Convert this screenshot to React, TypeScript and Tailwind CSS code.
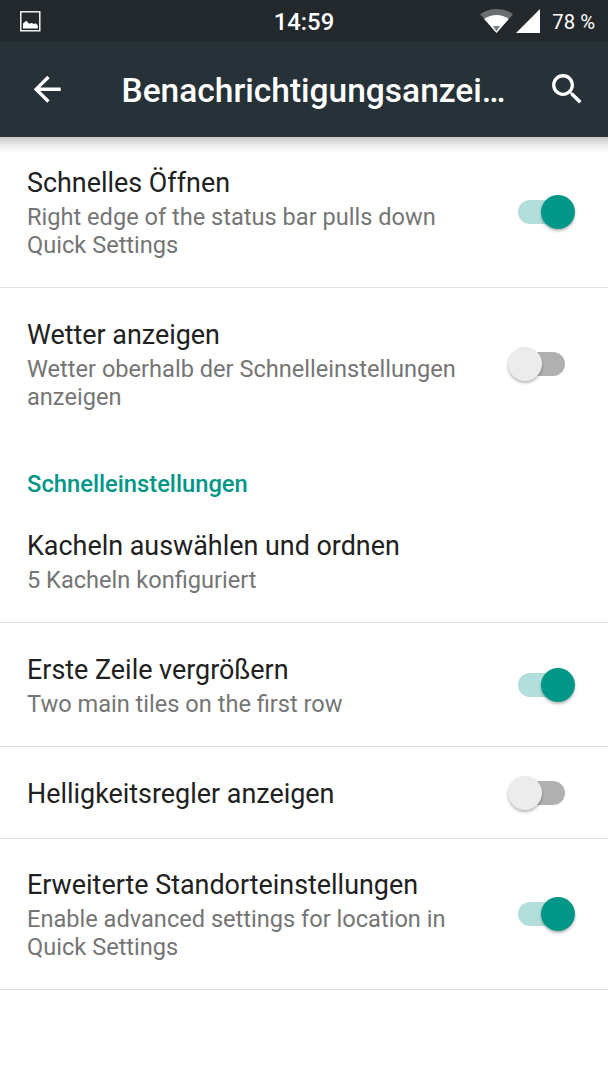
import { useState } from 'react'

interface Preference {
  id: string
  title: string
  summary?: string
  checked?: boolean
  divider?: boolean
  height: string
}

interface Section {
  header?: string
  items: Preference[]
}

const sections: Section[] = [
  {
    items: [
      {
        id: 'quick-pulldown',
        title: 'Schnelles Öffnen',
        summary: 'Right edge of the status bar pulls down Quick Settings',
        checked: true,
        divider: true,
        height: 'h-[151px]'
      },
      {
        id: 'weather',
        title: 'Wetter anzeigen',
        summary: 'Wetter oberhalb der Schnelleinstellungen anzeigen',
        checked: false,
        height: 'h-[151px]'
      }
    ]
  },
  {
    header: 'Schnelleinstellungen',
    items: [
      {
        id: 'tiles',
        title: 'Kacheln auswählen und ordnen',
        summary: '5 Kacheln konfiguriert',
        divider: true,
        height: 'h-[123px]'
      },
      {
        id: 'main-tiles',
        title: 'Erste Zeile vergrößern',
        summary: 'Two main tiles on the first row',
        checked: true,
        divider: true,
        height: 'h-[124px]'
      },
      {
        id: 'brightness',
        title: 'Helligkeitsregler anzeigen',
        checked: false,
        divider: true,
        height: 'h-[92px]'
      },
      {
        id: 'location',
        title: 'Erweiterte Standorteinstellungen',
        summary: 'Enable advanced settings for location in Quick Settings',
        checked: true,
        divider: true,
        height: 'h-[151px]'
      }
    ]
  }
]

function StatusBar() {
  return (
    <div className="grid h-[42px] grid-cols-3 items-center bg-[#23282c] pr-[13px] pl-5 text-white">
      <svg className="h-[21px] w-[21px]" viewBox="0 0 21 21" fill="none">
        <rect x="0.8" y="0.8" width="19" height="19" stroke="#fff" strokeWidth="1.4" />
        <path d="M3 17.6V12.5L6.2 9.8L9.2 12.8L11.5 12L14 13L15.5 12.2L17.8 14.2V17.6Z" fill="#fff" />
      </svg>
      <div className="pt-1 pr-[7px] text-center text-[23.8px] leading-none font-medium">14:59</div>
      <div className="flex items-center justify-end">
        <svg className="h-6 w-[33px]" viewBox="0 0 33 24">
          <path d="M0 5.2C9.5 -1.7 23.5 -1.7 33 5.2L16.5 24Z" fill="#6b6e70" />
          <path d="M4.2 10C11.5 4.6 21.5 4.6 28.8 10L16.5 24Z" fill="#fff" />
          <path d="M13 17H20L16.5 22.5Z" fill="#7b7e80" />
        </svg>
        <svg className="ml-[3px] h-6 w-6" viewBox="0 0 24 24" fill="#fff">
          <path d="M0 24L24 0V24Z" />
        </svg>
        <span className="ml-3 pt-[2px] text-[20.3px] leading-none whitespace-nowrap">78 %</span>
      </div>
    </div>
  )
}

function AppBar() {
  return (
    <header className="flex h-[95px] items-center bg-[#263238] pr-[21px] pl-[27px] text-white">
      <button aria-label="Zurück">
        <svg className="h-[40.5px] w-[40.5px]" viewBox="0 0 24 24" fill="currentColor">
          <path d="M20 11H7.83l5.59-5.59L12 4l-8 8 8 8 1.41-1.41L7.83 13H20v-2z" />
        </svg>
      </button>
      <h1 className="ml-[54px] flex-1 pt-[3px] text-[33.5px] leading-10 font-medium whitespace-nowrap">
        Benachrichtigungsanzei…
      </h1>
      <button aria-label="Suchen">
        <svg className="h-[40.5px] w-[40.5px]" viewBox="0 0 24 24" fill="currentColor">
          <path d="M15.5 14h-.79l-.28-.27C15.41 12.59 16 11.11 16 9.5 16 5.91 13.09 3 9.5 3S3 5.91 3 9.5 5.91 16 9.5 16c1.61 0 3.09-.59 4.23-1.57l.27.28v.79l5 4.99L20.49 19l-4.99-5zm-6 0C7.01 14 5 11.99 5 9.5S7.01 5 9.5 5 14 7.01 14 9.5 11.99 14 9.5 14z" />
        </svg>
      </button>
    </header>
  )
}

function Toggle({ checked, onChange }: { checked: boolean; onChange: () => void }) {
  return (
    <button
      role="switch"
      aria-checked={checked}
      onClick={onChange}
      className={`flex h-6 w-[47px] shrink-0 items-center rounded-full ${
        checked ? 'justify-end bg-[#b2dfdb]' : 'justify-start bg-[#b0b0b0]'
      }`}
    >
      <span
        className={`h-[34px] w-[34px] shrink-0 rounded-full shadow-[0_2px_3px_rgba(0,0,0,0.28)] ${
          checked ? '-mr-[10px] bg-[#009688]' : '-ml-[10px] bg-[#ececec]'
        }`}
      />
    </button>
  )
}

export default function App() {
  const [values, setValues] = useState<Record<string, boolean>>(() =>
    Object.fromEntries(
      sections.flatMap(section => section.items.map(item => [item.id, item.checked ?? false]))
    )
  )

  const toggle = (id: string) => setValues(prev => ({ ...prev, [id]: !prev[id] }))

  return (
    <div className="h-[1080px] w-[608px] overflow-hidden bg-white font-[Roboto,sans-serif]">
      <StatusBar />
      <div className="relative">
        <AppBar />
        {/* Drop shadow below the app bar */}
        <div className="absolute inset-x-0 top-full h-4 bg-linear-to-b from-black/22 via-black/8 via-50% to-transparent" />
      </div>

      <main>
        {sections.map((section, index) => (
          <section key={index}>
            {section.header && (
              <h2 className="flex h-[61px] items-end pb-[2px] pl-[27px] text-[23.75px] leading-7 font-medium text-[#009688]">
                {section.header}
              </h2>
            )}
            {section.items.map(item => (
              <div
                key={item.id}
                className={`flex items-center justify-between pr-[43px] pl-[27px] ${item.height} ${
                  item.divider ? 'border-b border-[#dedede]' : ''
                }`}
              >
                <div className={`w-[463px] ${item.summary ? '' : 'pt-[2px]'}`}>
                  <div className="text-[26.9px] leading-8 text-[#212121]">{item.title}</div>
                  {item.summary && (
                    <div className="mt-[5px] -mb-[3px] text-[23.6px] leading-[27.7px] text-[#757575]">{item.summary}</div>
                  )}
                </div>
                {item.checked !== undefined && (
                  <Toggle checked={values[item.id]} onChange={() => toggle(item.id)} />
                )}
              </div>
            ))}
          </section>
        ))}
      </main>
    </div>
  )
}
